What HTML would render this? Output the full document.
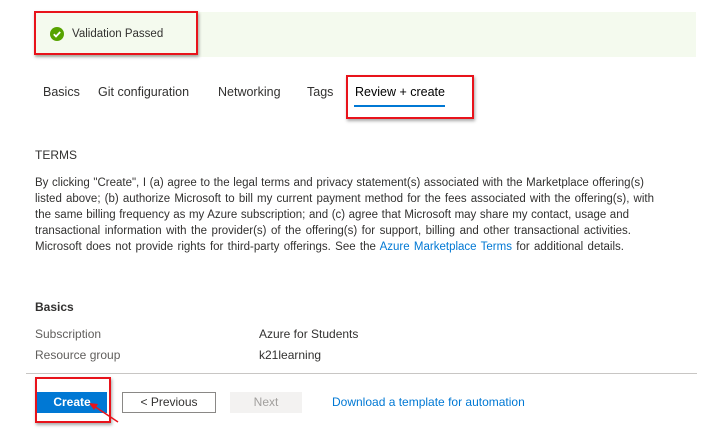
<!DOCTYPE html>
<html><head><meta charset="utf-8"><style>
body{margin:0;width:721px;height:435px;background:#fff;font-family:"Liberation Sans",sans-serif;color:#323130;position:relative;overflow:hidden}
.a{position:absolute;white-space:nowrap}
.t{font-size:12.5px;color:#323130}
.line{position:absolute;left:35px;font-size:11.5px;text-align:justify;text-align-last:justify;white-space:nowrap;height:16px;line-height:16px}
.red{position:absolute;border:2px solid #e8131b;box-shadow:1px 2px 3px rgba(0,0,0,.35)}
a{color:#0078d4;text-decoration:none}
</style></head><body>
<div class="a" style="left:35px;top:12px;width:661px;height:45px;background:#f4faee"></div>
<svg class="a" style="left:50px;top:27px" width="14" height="14" viewBox="0 0 14 14"><circle cx="7" cy="7" r="7" fill="#57a300"/><path d="M3.8 7.2l2.2 2.2 4.2-4.4" stroke="#fff" stroke-width="1.8" fill="none"/></svg>
<div class="a" style="left:72px;top:28px;font-size:11.5px">Validation Passed</div>
<div class="red" style="left:34px;top:11px;width:160px;height:40px"></div>

<div class="a t" style="left:43px;top:85px">Basics</div>
<div class="a t" style="left:98px;top:85px">Git configuration</div>
<div class="a t" style="left:218px;top:85px">Networking</div>
<div class="a t" style="left:307px;top:85px">Tags</div>
<div class="a t" style="left:355px;top:85px;color:#000">Review + create</div>
<div class="a" style="left:354px;top:105px;width:91px;height:2px;background:#0078d4"></div>
<div class="red" style="left:346px;top:75px;width:124px;height:40px"></div>

<div class="a" style="left:35px;top:148px;font-size:12px">TERMS</div>
<div class="line" style="top:175px;width:609px">By clicking "Create", I (a) agree to the legal terms and privacy statement(s) associated with the Marketplace offering(s)</div>
<div class="line" style="top:191px;width:619px">listed above; (b) authorize Microsoft to bill my current payment method for the fees associated with the offering(s), with</div>
<div class="line" style="top:207px;width:594px">the same billing frequency as my Azure subscription; and (c) agree that Microsoft may share my contact, usage and</div>
<div class="line" style="top:223px;width:596px">transactional information with the provider(s) of the offering(s) for support, billing and other transactional activities.</div>
<div class="line" style="top:239px;width:589px">Microsoft does not provide rights for third-party offerings. See the <a>Azure Marketplace Terms</a> for additional details.</div>

<div class="a" style="left:35px;top:300px;font-size:12px;font-weight:bold">Basics</div>
<div class="a" style="left:35px;top:327px;font-size:12px;color:#605e5c">Subscription</div>
<div class="a" style="left:259px;top:327px;font-size:12px">Azure for Students</div>
<div class="a" style="left:35px;top:348px;font-size:12px;color:#605e5c">Resource group</div>
<div class="a" style="left:259px;top:348px;font-size:12px">k21learning</div>

<div class="a" style="left:26px;top:373px;width:671px;height:1px;background:#c8c6c4"></div>
<div class="a" style="left:37px;top:392px;width:70px;height:21px;background:#0078d4;color:#fff;font-size:12px;font-weight:bold;text-align:center;line-height:21px">Create</div>
<div class="red" style="left:35px;top:377px;width:72px;height:42px"></div>
<svg class="a" style="left:85px;top:398px" width="40" height="28"><path d="M33 24L9 8" stroke="#e8131b" stroke-width="1.5"/><path d="M4 5l9 1-4 6z" fill="#e8131b"/></svg>
<div class="a" style="left:122px;top:392px;width:92px;height:19px;border:1px solid #8a8886;font-size:12px;text-align:center;line-height:19px">&lt; Previous</div>
<div class="a" style="left:230px;top:392px;width:72px;height:21px;background:#f3f2f1;color:#a19f9d;font-size:12px;text-align:center;line-height:21px">Next</div>
<div class="a" style="left:332px;top:395px;font-size:12px;color:#0078d4">Download a template for automation</div>
</body></html>
